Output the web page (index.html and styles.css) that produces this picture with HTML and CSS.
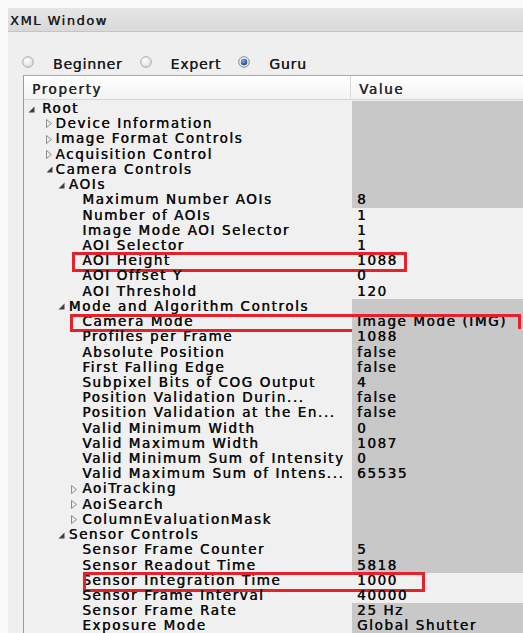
FILE: index.html
```html
<!DOCTYPE html>
<html>
<head>
<meta charset="utf-8">
<title>XML Window</title>
<link rel="stylesheet" href="styles.css">
</head>
<body>
<div class="window">
  <div class="titlebar">XML Window</div>
  <div class="panel">
    <div class="levels">
      <label class="opt">
        <svg class="radio" width="12" height="12" viewBox="0 0 12 12"><defs><radialGradient id="rg1" cx="0.4" cy="0.35" r="0.7"><stop offset="0" stop-color="#ffffff"/><stop offset="1" stop-color="#d9d9d9"/></radialGradient></defs><circle cx="6" cy="6" r="5.3" fill="url(#rg1)" stroke="#a9a9a9"/></svg>
        <span>Beginner</span>
      </label>
      <label class="opt">
        <svg class="radio" width="12" height="12" viewBox="0 0 12 12"><circle cx="6" cy="6" r="5.3" fill="url(#rg1)" stroke="#a9a9a9"/></svg>
        <span>Expert</span>
      </label>
      <label class="opt">
        <svg class="radio" width="12" height="12" viewBox="0 0 12 12"><defs><radialGradient id="rg2" cx="0.4" cy="0.35" r="0.6"><stop offset="0" stop-color="#7fb6e6"/><stop offset="1" stop-color="#1b4f86"/></radialGradient></defs><circle cx="6" cy="6" r="5.3" fill="url(#rg1)" stroke="#8f8f8f"/><circle cx="6" cy="6" r="3.2" fill="url(#rg2)"/></svg>
        <span>Guru</span>
      </label>
    </div>

    <div class="tree">
      <div class="head">
        <div class="hcell hprop">Property</div>
        <div class="hcell hval">Value</div>
      </div>
      <div class="rows">
        <div class="row ro"><div class="prop l0"><span class="tw"><svg class="open" width="7" height="7" viewBox="0 0 7 7"><path d="M6.5 0.5V6.5H0.5Z"/></svg></span>Root</div><div class="val"></div></div>
        <div class="row ro"><div class="prop l1"><span class="tw"><svg class="shut" width="6" height="9" viewBox="0 0 6 9"><path d="M0.5 0.5L5.5 4.5L0.5 8.5Z"/></svg></span>Device Information</div><div class="val"></div></div>
        <div class="row ro"><div class="prop l1"><span class="tw"><svg class="shut" width="6" height="9" viewBox="0 0 6 9"><path d="M0.5 0.5L5.5 4.5L0.5 8.5Z"/></svg></span>Image Format Controls</div><div class="val"></div></div>
        <div class="row ro"><div class="prop l1"><span class="tw"><svg class="shut" width="6" height="9" viewBox="0 0 6 9"><path d="M0.5 0.5L5.5 4.5L0.5 8.5Z"/></svg></span>Acquisition Control</div><div class="val"></div></div>
        <div class="row ro"><div class="prop l1"><span class="tw"><svg class="open" width="7" height="7" viewBox="0 0 7 7"><path d="M6.5 0.5V6.5H0.5Z"/></svg></span>Camera Controls</div><div class="val"></div></div>
        <div class="row ro"><div class="prop l2"><span class="tw"><svg class="open" width="7" height="7" viewBox="0 0 7 7"><path d="M6.5 0.5V6.5H0.5Z"/></svg></span>AOIs</div><div class="val"></div></div>
        <div class="row ro"><div class="prop l3"><span class="tw"></span>Maximum Number AOIs</div><div class="val">8</div></div>
        <div class="row"><div class="prop l3"><span class="tw"></span>Number of AOIs</div><div class="val">1</div></div>
        <div class="row"><div class="prop l3"><span class="tw"></span>Image Mode AOI Selector</div><div class="val">1</div></div>
        <div class="row"><div class="prop l3"><span class="tw"></span>AOI Selector</div><div class="val">1</div></div>
        <div class="row"><div class="prop l3"><span class="tw"></span>AOI Height</div><div class="val">1088</div><div class="mark mark-height"></div></div>
        <div class="row"><div class="prop l3"><span class="tw"></span>AOI Offset Y</div><div class="val">0</div></div>
        <div class="row"><div class="prop l3"><span class="tw"></span>AOI Threshold</div><div class="val">120</div></div>
        <div class="row ro"><div class="prop l2"><span class="tw"><svg class="open" width="7" height="7" viewBox="0 0 7 7"><path d="M6.5 0.5V6.5H0.5Z"/></svg></span>Mode and Algorithm Controls</div><div class="val"></div></div>
        <div class="row ro"><div class="prop l3"><span class="tw"></span>Camera Mode</div><div class="val">Image Mode (IMG)</div><div class="mark mark-mode"></div></div>
        <div class="row ro"><div class="prop l3"><span class="tw"></span>Profiles per Frame</div><div class="val">1088</div></div>
        <div class="row ro"><div class="prop l3"><span class="tw"></span>Absolute Position</div><div class="val">false</div></div>
        <div class="row ro"><div class="prop l3"><span class="tw"></span>First Falling Edge</div><div class="val">false</div></div>
        <div class="row ro"><div class="prop l3"><span class="tw"></span>Subpixel Bits of COG Output</div><div class="val">4</div></div>
        <div class="row ro"><div class="prop l3"><span class="tw"></span>Position Validation Durin...</div><div class="val">false</div></div>
        <div class="row ro"><div class="prop l3"><span class="tw"></span>Position Validation at the En...</div><div class="val">false</div></div>
        <div class="row ro"><div class="prop l3"><span class="tw"></span>Valid Minimum Width</div><div class="val">0</div></div>
        <div class="row ro"><div class="prop l3"><span class="tw"></span>Valid Maximum Width</div><div class="val">1087</div></div>
        <div class="row ro"><div class="prop l3"><span class="tw"></span>Valid Minimum Sum of Intensity</div><div class="val">0</div></div>
        <div class="row ro"><div class="prop l3"><span class="tw"></span>Valid Maximum Sum of Intens...</div><div class="val">65535</div></div>
        <div class="row ro"><div class="prop l3"><span class="tw"><svg class="shut" width="6" height="9" viewBox="0 0 6 9"><path d="M0.5 0.5L5.5 4.5L0.5 8.5Z"/></svg></span>AoiTracking</div><div class="val"></div></div>
        <div class="row ro"><div class="prop l3"><span class="tw"><svg class="shut" width="6" height="9" viewBox="0 0 6 9"><path d="M0.5 0.5L5.5 4.5L0.5 8.5Z"/></svg></span>AoiSearch</div><div class="val"></div></div>
        <div class="row ro"><div class="prop l3"><span class="tw"><svg class="shut" width="6" height="9" viewBox="0 0 6 9"><path d="M0.5 0.5L5.5 4.5L0.5 8.5Z"/></svg></span>ColumnEvaluationMask</div><div class="val"></div></div>
        <div class="row ro"><div class="prop l2"><span class="tw"><svg class="open" width="7" height="7" viewBox="0 0 7 7"><path d="M6.5 0.5V6.5H0.5Z"/></svg></span>Sensor Controls</div><div class="val"></div></div>
        <div class="row ro"><div class="prop l3"><span class="tw"></span>Sensor Frame Counter</div><div class="val">5</div></div>
        <div class="row ro"><div class="prop l3"><span class="tw"></span>Sensor Readout Time</div><div class="val">5818</div></div>
        <div class="row"><div class="prop l3"><span class="tw"></span>Sensor Integration Time</div><div class="val">1000</div><div class="mark mark-integration"></div></div>
        <div class="row"><div class="prop l3"><span class="tw"></span>Sensor Frame Interval</div><div class="val">40000</div></div>
        <div class="row ro"><div class="prop l3"><span class="tw"></span>Sensor Frame Rate</div><div class="val">25 Hz</div></div>
        <div class="row ro"><div class="prop l3"><span class="tw"></span>Exposure Mode</div><div class="val">Global Shutter</div></div>
      </div>
    </div>
  </div>
</div>
</body>
</html>
```

FILE: styles.css
```css
html, body {
  margin: 0;
  padding: 0;
  height: 100%;
  overflow: hidden;
}

body {
  background: #fafafa;
  font-family: "DejaVu Sans", Verdana, sans-serif;
  color: #111;
}

.window {
  margin: 8px 0 0 8px;
  background: #efefef;
  min-height: 640px;
}

/* title strip */
.titlebar {
  height: 23px;
  line-height: 26px;
  padding-left: 2px;
  font-size: 13px;
  letter-spacing: 1.5px;
  color: #1c1c1c;
  text-shadow: 0.3px 0 0 #1c1c1c;
  background: linear-gradient(#e6e6e6, #d9d9d9);
  border-bottom: 1px solid #c4c4c4;
  white-space: nowrap;
  overflow: hidden;
}

.panel {
  padding: 21px 0 0 15px;
}

/* user level selector */
.levels {
  display: flex;
  align-items: center;
  height: 18px;
  margin-left: -1px;
}

.opt {
  display: flex;
  align-items: center;
  font-size: 14px;
  line-height: 18px;
  letter-spacing: 0.8px;
  color: #1a1a1a;
  text-shadow: 0.3px 0 0 #1a1a1a;
  margin-right: 17px;
}

.opt span {
  padding-top: 3px;
}

.opt .radio {
  margin-right: 19px;
  flex: none;
}

/* property tree */
.tree {
  margin-top: 4px;
  border-top: 1px solid #a9a9a9;
  border-left: 1px solid #9c9c9c;
  background: #f0f0f0;
  font-size: 13.5px;
  letter-spacing: 1.6px;
  color: #0c0c0c;
  text-shadow: 0.45px 0 0 #0c0c0c;
}

.head {
  display: grid;
  grid-template-columns: 327px 1fr;
  height: 23px;
  background: linear-gradient(#ffffff, #f3f3f3);
  border-bottom: 1px solid #d6d6d6;
}

.hcell {
  height: 20px;
  line-height: 20px;
  padding: 3px 0 0 8px;
  color: #262626;
  text-shadow: 0.45px 0 0 #262626;
  white-space: nowrap;
  overflow: hidden;
}

.hprop {
  border-right: 1px solid #dadada;
}

.rows {
  padding-top: 1px;
}

.row {
  position: relative;
  display: grid;
  grid-template-columns: 328px 1fr;
  height: 15.23px;
  line-height: 15.23px;
  white-space: nowrap;
}

.prop {
  display: flex;
  align-items: center;
  overflow: hidden;
  padding-left: 2px;
}

.prop.l1 { padding-left: 18.4px; }
.prop.l2 { padding-left: 31.8px; }
.prop.l3 { padding-left: 45.2px; }

.prop.l0 .tw {
  width: 16px;
}

.tw {
  flex: none;
  width: 13px;
  height: 15px;
  display: flex;
  align-items: center;
  padding-left: 2px;
  box-sizing: border-box;
}

.prop.l1 .tw {
  padding-left: 4px;
}

.tw .open {
  fill: #3e3e3e;
  margin-top: 1px;
}

.tw .shut {
  fill: none;
  stroke: #8d8d8d;
  stroke-width: 1;
}

.val {
  padding-left: 5px;
  overflow: hidden;
}

.row.ro .val {
  background: #c8c8c8;
}

/* red highlight frames */
.mark {
  position: absolute;
  box-sizing: border-box;
  border: 3px solid #e3222b;
  pointer-events: none;
}

.mark-height {
  left: 48px;
  top: -1px;
  width: 335px;
  height: 20px;
}

.mark-mode {
  left: 46px;
  top: 0;
  width: 451px;
  height: 18px;
}

.mark-integration {
  left: 59px;
  top: -1px;
  width: 342px;
  height: 20px;
}
```
